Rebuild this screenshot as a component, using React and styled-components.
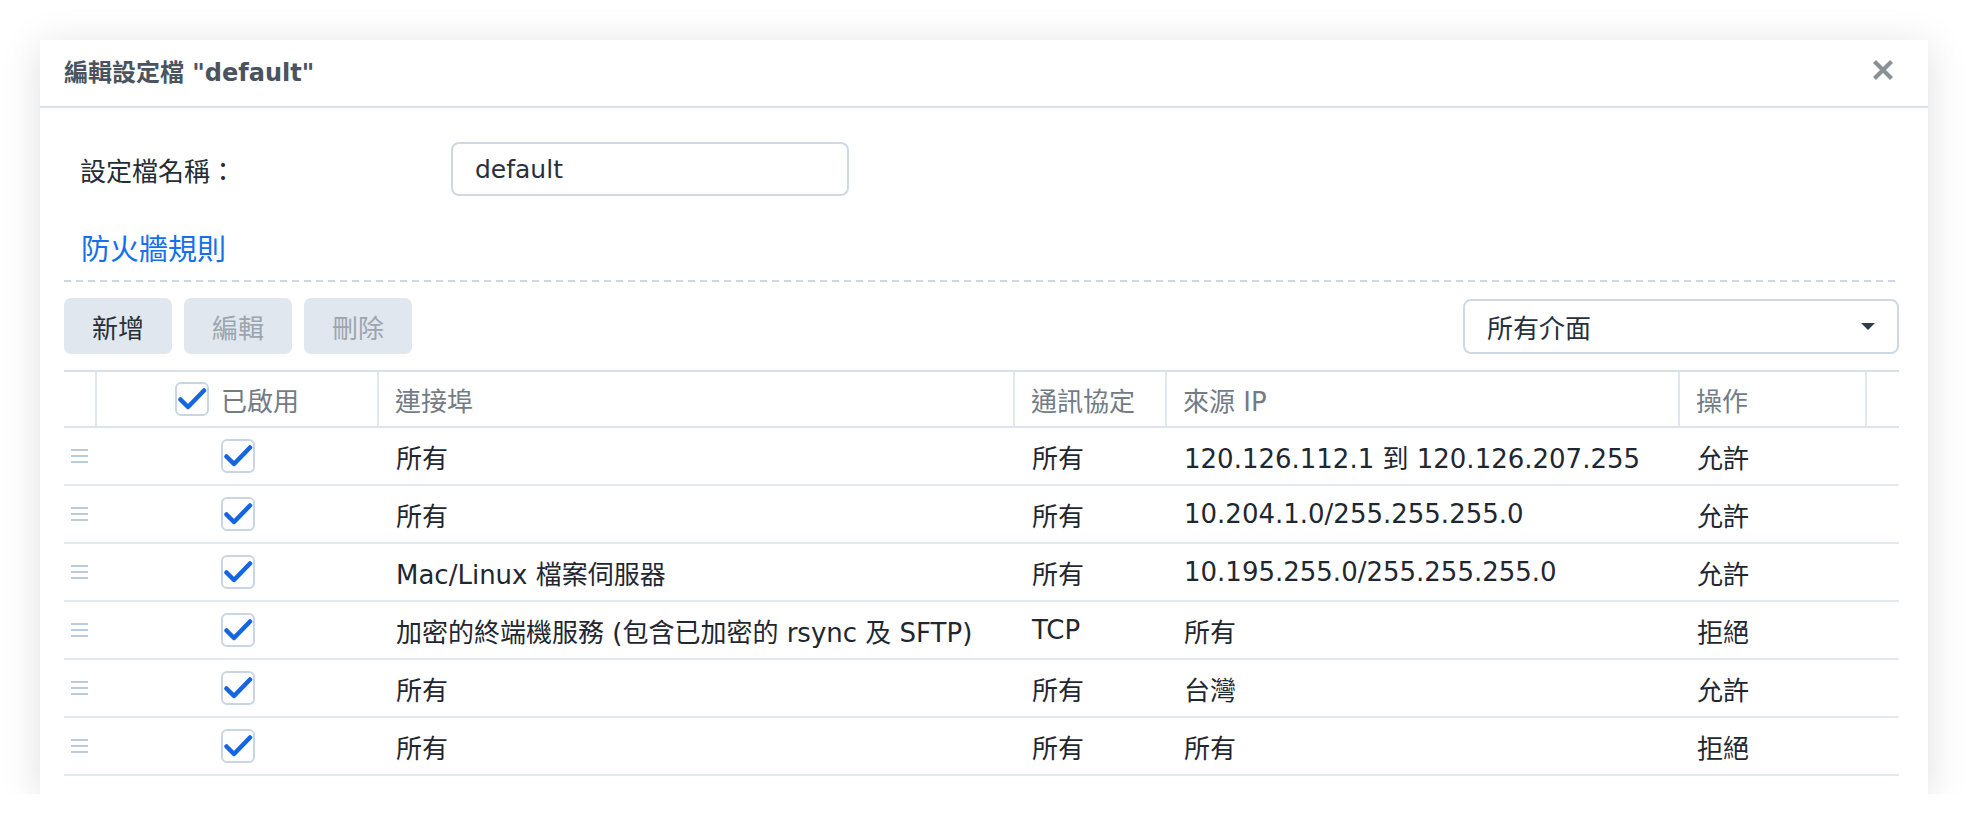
import React from "react";
import styled, { createGlobalStyle } from "styled-components";

const GlobalStyle = createGlobalStyle`
  html, body {
    margin: 0;
    padding: 0;
    background: #ffffff;
  }
  body {
    font-family: "DejaVu Sans", "Noto Sans CJK TC", sans-serif;
    color: #1f2731;
  }
`;

const Page = styled.div`
  padding: 40px 40px 0;
`;

const Dialog = styled.div`
  background: #fff;
  box-shadow: 0 6px 38px rgba(0, 0, 0, 0.13);
`;

const Header = styled.div`
  height: 68px;
  display: flex;
  align-items: center;
  justify-content: space-between;
  padding: 0 34px 6px 24px;
  box-sizing: border-box;
  border-bottom: 2px solid #d7e2ec;
`;

const Title = styled.h1`
  margin: 0;
  font-size: 24px;
  font-weight: bold;
  color: #4a535e;
`;

const CloseButton = styled.button`
  border: 0;
  background: none;
  padding: 0;
  width: 22px;
  height: 22px;
  display: flex;
  cursor: pointer;
`;

const Body = styled.div`
  padding: 34px 29px 18px 24px;
`;

const FormRow = styled.div`
  display: flex;
  align-items: center;
  padding-left: 16px;
`;

const Label = styled.label`
  width: 371px;
  font-size: 26px;
  color: #242c36;
`;

const TextInput = styled.input`
  width: 398px;
  height: 54px;
  box-sizing: border-box;
  border: 2px solid #cfd9e4;
  border-radius: 8px;
  padding: 0 22px;
  font-family: inherit;
  font-size: 25px;
  color: #27303b;
  outline: none;
`;

const SectionTitle = styled.h2`
  margin: 34px 0 10px;
  padding-left: 17px;
  font-size: 29px;
  line-height: 40px;
  font-weight: normal;
  color: #1670e8;
`;

const Dashed = styled.div`
  height: 2px;
  background: repeating-linear-gradient(
    to right,
    #cfd8e2 0 7px,
    transparent 7px 12px
  );
`;

const Toolbar = styled.div`
  margin-top: 16px;
  display: flex;
  justify-content: space-between;
  align-items: center;
`;

const ButtonGroup = styled.div`
  display: flex;
  gap: 12px;
`;

const ToolButton = styled.button`
  width: 108px;
  height: 56px;
  border: 0;
  border-radius: 7px;
  background: #e1e7ee;
  font-family: inherit;
  font-size: 26px;
  color: ${(p) => (p.disabled ? "#9ca4ad" : "#27303b")};
  cursor: ${(p) => (p.disabled ? "default" : "pointer")};
`;

const Select = styled.div`
  width: 436px;
  height: 55px;
  box-sizing: border-box;
  border: 2px solid #cfd9e4;
  border-radius: 8px;
  padding: 0 22px 0 22px;
  display: flex;
  align-items: center;
  justify-content: space-between;
  font-size: 26px;
  color: #27303b;
`;

const Caret = styled.span`
  width: 0;
  height: 0;
  border-left: 7px solid transparent;
  border-right: 7px solid transparent;
  border-top: 7px solid #333c47;
`;

const Table = styled.div`
  margin-top: 16px;
  border-top: 2px solid #d8e0e9;
`;

const cols = "33px 282px 636px 152px 513px 187px 1fr";

const HeadRow = styled.div`
  display: grid;
  grid-template-columns: ${cols};
  height: 56px;
  border-bottom: 2px solid #dbe3eb;
  box-sizing: border-box;
`;

const HeadCell = styled.div`
  display: flex;
  align-items: center;
  justify-content: ${(p) => (p.center ? "center" : "flex-start")};
  gap: 12px;
  padding-left: ${(p) => (p.center ? "0" : "16px")};
  border-right: ${(p) => (p.last ? "0" : "2px solid #dfe6ee")};
  font-size: 26px;
  color: #737b85;
`;

const Row = styled.div`
  display: grid;
  grid-template-columns: ${cols};
  height: 58px;
  border-bottom: 2px solid #e3e8ee;
  box-sizing: border-box;
`;

const Cell = styled.div`
  display: flex;
  align-items: center;
  justify-content: ${(p) => (p.center ? "center" : "flex-start")};
  padding-left: ${(p) => (p.center ? "0" : "17px")};
  font-size: 26px;
  color: #1f2731;
  white-space: nowrap;
`;

const HandleCell = styled(Cell)`
  padding-left: 7px;
`;

const CheckBox = styled.span`
  width: 34px;
  height: 34px;
  box-sizing: border-box;
  border: 2px solid #c9d5e1;
  border-radius: 6px;
  background: #fff;
  display: inline-flex;
  align-items: center;
  justify-content: center;
  flex: none;
`;

const Check = () => (
  <CheckBox>
    <svg width="30" height="30" viewBox="0 0 30 30">
      <path
        d="M3.5 15.5 L11 23 L27 6.5"
        fill="none"
        stroke="#1466e0"
        strokeWidth="4.5"
        strokeLinecap="round"
        strokeLinejoin="round"
      />
    </svg>
  </CheckBox>
);

const DragHandle = () => (
  <svg width="17" height="14" viewBox="0 0 17 14">
    <rect x="0" y="0" width="17" height="2" fill="#bccadb" />
    <rect x="0" y="6" width="17" height="2" fill="#bccadb" />
    <rect x="0" y="12" width="17" height="2" fill="#bccadb" />
  </svg>
);

const rules = [
  { port: "所有", proto: "所有", source: "120.126.112.1 到 120.126.207.255", action: "允許" },
  { port: "所有", proto: "所有", source: "10.204.1.0/255.255.255.0", action: "允許" },
  { port: "Mac/Linux 檔案伺服器", proto: "所有", source: "10.195.255.0/255.255.255.0", action: "允許" },
  { port: "加密的終端機服務 (包含已加密的 rsync 及 SFTP)", proto: "TCP", source: "所有", action: "拒絕" },
  { port: "所有", proto: "所有", source: "台灣", action: "允許" },
  { port: "所有", proto: "所有", source: "所有", action: "拒絕" },
];

export default function App() {
  return (
    <Page>
      <GlobalStyle />
      <Dialog>
        <Header>
          <Title>編輯設定檔 "default"</Title>
          <CloseButton aria-label="close">
            <svg width="22" height="22" viewBox="0 0 22 22">
              <path
                d="M2.5 2.5 L19.5 19.5 M19.5 2.5 L2.5 19.5"
                stroke="#8b9098"
                strokeWidth="4.2"
              />
            </svg>
          </CloseButton>
        </Header>
        <Body>
          <FormRow>
            <Label>設定檔名稱：</Label>
            <TextInput defaultValue="default" />
          </FormRow>
          <SectionTitle>防火牆規則</SectionTitle>
          <Dashed />
          <Toolbar>
            <ButtonGroup>
              <ToolButton>新增</ToolButton>
              <ToolButton disabled>編輯</ToolButton>
              <ToolButton disabled>刪除</ToolButton>
            </ButtonGroup>
            <Select>
              <span>所有介面</span>
              <Caret />
            </Select>
          </Toolbar>
          <Table>
            <HeadRow>
              <HeadCell />
              <HeadCell center>
                <Check />
                <span>已啟用</span>
              </HeadCell>
              <HeadCell>連接埠</HeadCell>
              <HeadCell>通訊協定</HeadCell>
              <HeadCell>來源 IP</HeadCell>
              <HeadCell>操作</HeadCell>
              <HeadCell last />
            </HeadRow>
            {rules.map((r, i) => (
              <Row key={i}>
                <HandleCell>
                  <DragHandle />
                </HandleCell>
                <Cell center>
                  <Check />
                </Cell>
                <Cell>{r.port}</Cell>
                <Cell>{r.proto}</Cell>
                <Cell>{r.source}</Cell>
                <Cell>{r.action}</Cell>
                <Cell />
              </Row>
            ))}
          </Table>
        </Body>
      </Dialog>
    </Page>
  );
}
